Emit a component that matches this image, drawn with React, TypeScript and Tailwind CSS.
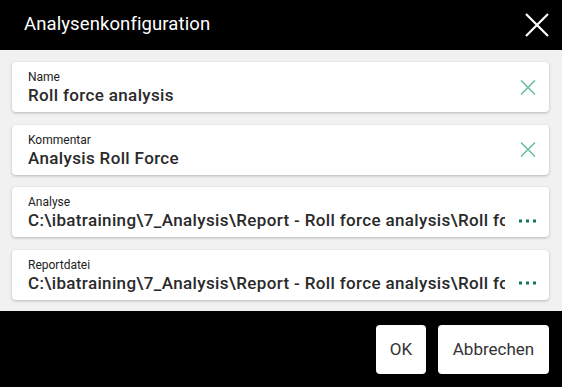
import React from "react";

const font = { fontFamily: "Roboto, 'Noto Sans', sans-serif" };

function ClearIcon() {
  return (
    <svg width="16" height="15" viewBox="0 0 16 15" className="shrink-0">
      <path d="M1 0.5 L15 14.5 M15 0.5 L1 14.5" stroke="#6fbf9b" strokeWidth="1.6" fill="none" />
    </svg>
  );
}

function Dots() {
  return (
    <svg width="17" height="4" viewBox="0 0 17 4" className="shrink-0">
      <rect x="0" y="0.5" width="3" height="3" fill="#137a4f" />
      <rect x="7" y="0.5" width="3" height="3" fill="#137a4f" />
      <rect x="14" y="0.5" width="3" height="3" fill="#137a4f" />
    </svg>
  );
}

function Field({ label, value, kind }: { label: string; value: string; kind: "clear" | "dots" }) {
  return (
    <div className="h-[50px] bg-white rounded-[4px] shadow-[0_1px_3px_rgba(0,0,0,0.25)] flex items-center pl-[16px] pr-[13px]">
      <div className="flex-1 min-w-0 flex flex-col pt-[1px]">
        <div className="text-[12px] leading-[16px] text-[#222]">{label}</div>
        <div className="text-[17px] leading-[21px] tracking-[0.35px] font-medium text-[#2a2a2a] whitespace-nowrap overflow-hidden">{value}</div>
      </div>
      <div className={kind === "clear" ? "ml-3" : "ml-[14px] mt-[17px]"}>
        {kind === "clear" ? <ClearIcon /> : <Dots />}
      </div>
    </div>
  );
}

export default function App() {
  const path = "C:\\ibatraining\\7_Analysis\\Report - Roll force analysis\\Roll force analysis.pdo";
  const path2 = "C:\\ibatraining\\7_Analysis\\Report - Roll force analysis\\Roll force analysis.pdf";
  return (
    <div className="w-[562px] h-[387px] flex flex-col bg-black" style={font}>
      <div className="h-[50px] flex items-center justify-between pl-[24px] pr-[13px]">
        <div className="text-white text-[18.5px] tracking-[0.1px]">Analysenkonfiguration</div>
        <svg width="24" height="24" viewBox="0 0 24 24">
          <path d="M1 1 L23 23 M23 1 L1 23" stroke="white" strokeWidth="2.2" fill="none" />
        </svg>
      </div>
      <div className="h-[261px] bg-[#f1f1f1] pt-[12px] pl-[12px] pr-[13px] flex flex-col gap-[12.5px]">
        <Field label="Name" value="Roll force analysis" kind="clear" />
        <Field label="Kommentar" value="Analysis Roll Force" kind="clear" />
        <Field label="Analyse" value={path} kind="dots" />
        <Field label="Reportdatei" value={path2} kind="dots" />
      </div>
      <div className="flex-1 flex items-start justify-end gap-[12px] pt-[14px] pr-[13px]">
        <button className="h-[49px] w-[50px] bg-white rounded-[4px] text-[17px] text-[#333]">OK</button>
        <button className="h-[49px] w-[111px] bg-white rounded-[4px] text-[17px] text-[#333]">Abbrechen</button>
      </div>
    </div>
  );
}
